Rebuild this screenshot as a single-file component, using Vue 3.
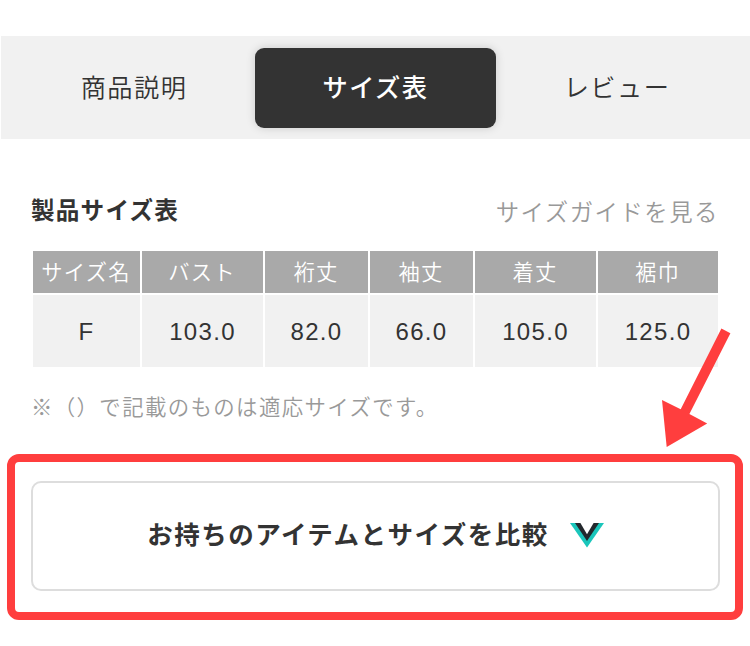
<script setup>
import { ref } from 'vue'

const tabs = ['商品説明', 'サイズ表', 'レビュー']
const activeTab = ref(1)

const columns = [
    { name: 'サイズ名', value: 'F' },
    { name: 'バスト', value: '103.0' },
    { name: '裄丈', value: '82.0' },
    { name: '袖丈', value: '66.0' },
    { name: '着丈', value: '105.0' },
    { name: '裾巾', value: '125.0' },
]
</script>

<template>
    <div class="page">
        <nav class="tabs">
            <button
                v-for="(tab, i) in tabs"
                :key="tab"
                class="tab"
                :class="{ active: i === activeTab }"
                @click="activeTab = i"
            >{{ tab }}</button>
        </nav>

        <section class="sizes">
            <header class="sizes-head">
                <h2>製品サイズ表</h2>
                <a class="guide">サイズガイドを見る</a>
            </header>

            <div class="size-table">
                <div v-for="col in columns" :key="col.name" class="th">{{ col.name }}</div>
                <div v-for="col in columns" :key="col.value" class="td">{{ col.value }}</div>
            </div>

            <p class="note">※（）で記載のものは適応サイズです。</p>
        </section>

        <div class="highlight">
            <button class="compare">
                <span>お持ちのアイテムとサイズを比較</span>
                <svg class="logo" width="34" height="25" viewBox="0 0 34 25">
                    <path d="M0 0H34L17 24.4Z" fill="#1ac6bb" />
                    <path d="M5 0H29L17 18Z" fill="#23282d" />
                    <path d="M10.4 0H23.6L17 11.3Z" fill="#fff" />
                </svg>
            </button>
        </div>

        <!-- arrow pointing at the compare button -->
        <svg class="arrow" width="70" height="120" viewBox="661 328 70 120">
            <path d="M666.7 447L662 400L680.7 409.3L721.4 328.6L730.4 333.3L689.4 414L707.2 423.4Z" fill="#ff3e3e" />
        </svg>
    </div>
</template>

<style>
body {
    background: #fff;
}
</style>

<style scoped>
.page {
    position: relative;
    box-sizing: border-box;
    width: 750px;
    height: 646px;
    padding-top: 36px;
    overflow: hidden;
    color: #333;
    font-family: "Noto Sans CJK JP", sans-serif;
}

button {
    padding: 0;
    border: 0;
    background: none;
    color: inherit;
    font-family: inherit;
}

.tabs {
    display: grid;
    grid-template-columns: 242px 241px 242px;
    justify-content: center;
    align-items: center;
    height: 103px;
    margin-left: 1px;
    background: #f1f1f1;
}

.tab {
    height: 80px;
    padding-bottom: 3px;
    border-radius: 9px;
    font-size: 25.2px;
    letter-spacing: 1.5px;
    font-weight: 350;
}

.tab.active {
    background: #333;
    color: #fff;
    font-weight: 500;
    box-shadow: 0 0 10px rgba(0, 0, 0, 0.16);
}

.sizes {
    padding: 0 32px 0 33px;
}

.sizes-head {
    display: flex;
    justify-content: space-between;
    height: 112px;
    line-height: 36px;
    padding-top: 52px;
    box-sizing: border-box;
    margin: 0 -1px 0 -2px;
}

h2 {
    margin: 0;
    font-size: 23.6px;
    font-weight: 700;
    letter-spacing: 1.2px;
}

.guide {
    padding-top: 2px;
    color: #999;
    font-size: 23.4px;
    font-weight: 350;
    letter-spacing: 1.5px;
}

.size-table {
    display: grid;
    grid-template-columns: 107px 121px 103px 103px 121px 120px;
    grid-template-rows: 42px 72px;
    gap: 2px;
}

.th,
.td {
    display: flex;
    align-items: center;
    justify-content: center;
}

.th {
    padding: 0 1px 3px 0;
    background: #a9a9a9;
    color: #fff;
    font-size: 21.3px;
    font-weight: 350;
    letter-spacing: 1.2px;
}

.td {
    padding-top: 2px;
    background: #f1f1f1;
    font-family: "Liberation Sans", sans-serif;
    font-size: 24px;
    letter-spacing: 1.3px;
}

.note {
    margin: 23px 0 0 -2px;
    color: #999;
    font-size: 21.4px;
    font-weight: 350;
    line-height: 32px;
    letter-spacing: 1.4px;
}

.highlight {
    box-sizing: border-box;
    width: 736px;
    height: 166px;
    margin: 32px 0 0 7px;
    padding: 19px 15px 0 16px;
    border: 8px solid #ff3e3e;
    border-radius: 12px;
}

.compare {
    display: flex;
    align-items: center;
    justify-content: center;
    gap: 21px;
    box-sizing: border-box;
    width: 100%;
    height: 110px;
    padding-bottom: 8px;
    border: 2px solid #ddd;
    border-radius: 10px;
    font-size: 25.5px;
    font-weight: 700;
    letter-spacing: 1.5px;
}

.logo {
    margin-top: 7px;
}

.arrow {
    position: absolute;
    left: 661px;
    top: 328px;
}
</style>
